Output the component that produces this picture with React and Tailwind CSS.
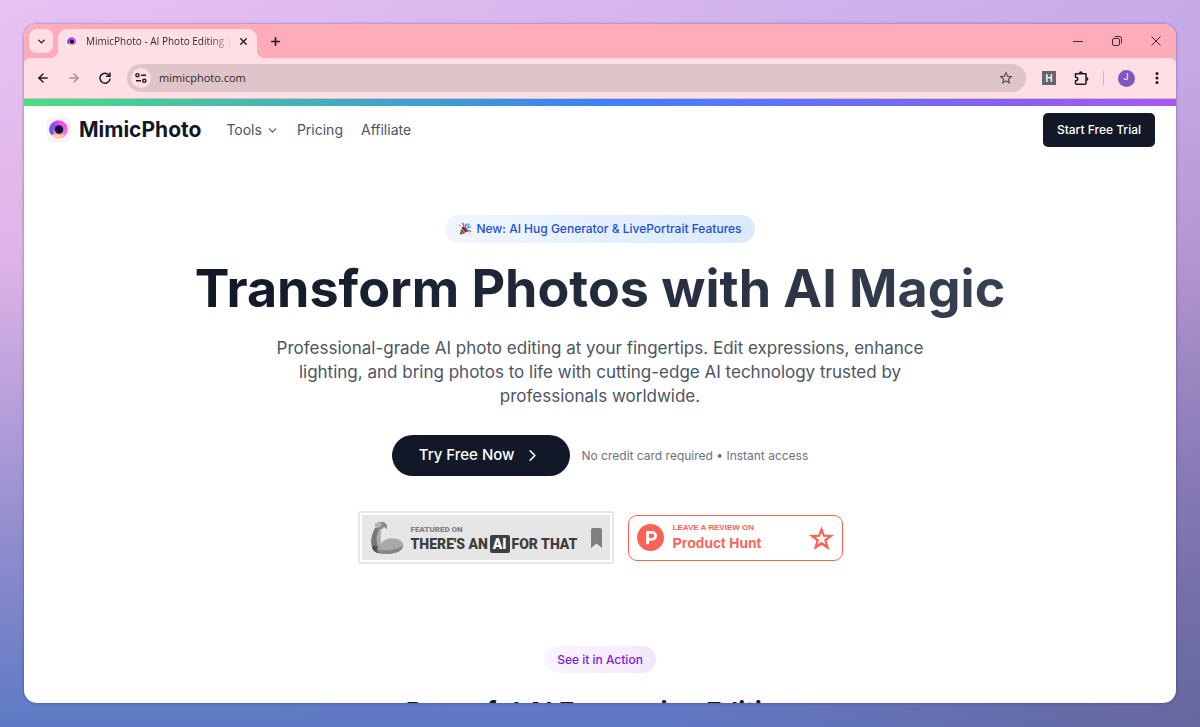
import { useId } from "react";
import { ArrowLeft, ArrowRight, ChevronDown, ChevronRight, Plus, X } from "lucide-react";

function LogoMark({ className }) {
  const id = useId();

  return (
    <svg viewBox="0 0 24 24" className={className} aria-hidden="true">
      <defs>
        <linearGradient id={`${id}-ring`} x1="0.8" y1="0" x2="0.4" y2="1">
          <stop offset="0" stopColor="#f03ff0" />
          <stop offset="0.6" stopColor="#f774dc" />
          <stop offset="1" stopColor="#ffc39a" />
        </linearGradient>
        <linearGradient id={`${id}-side`} x1="0" y1="0.7" x2="1" y2="0">
          <stop offset="0" stopColor="#5a62f5" />
          <stop offset="0.4" stopColor="#8a50f0" />
          <stop offset="0.9" stopColor="#f044f0" />
        </linearGradient>
      </defs>
      <rect x="0.5" y="0.5" width="23" height="23" rx="5" fill="#f8f5fd" stroke="#f0edf8" />
      <circle cx="11.500" cy="11.500" r="9.300" fill={`url(#${id}-ring)`} />
      <path d="M10 2.500C4.500 4 1.500 8.500 2.400 13.500 3.500 16.500 5 17.500 7 16.500 5.500 13 7.500 8.500 13 7.500Z" fill={`url(#${id}-side)`} />
      <path d="M4.500 17C8 15.500 12 18 17.500 16 15 21.500 8 22.500 4.500 17Z" fill="#ffcfa8" />
      <circle cx="12" cy="11.500" r="4.300" fill="#160f33" />
    </svg>
  );
}

function PartyIcon() {
  return (
    <svg viewBox="0 0 24 24" className="size-3.5" aria-hidden="true">
      <path d="M2 22 7 8l9 9Z" fill="#e0a03c" />
      <path d="M5 14l6 6M4 18l3 3M7 9l8 8" stroke="#4b3b63" strokeWidth="2.200" />
      <ellipse cx="12" cy="12.500" rx="3" ry="6" transform="rotate(-45 12 12.500)" fill="#5a3a56" />
      <path d="M9 7c1-2 0-4-2-5M12 10c0-4 1-6 4-7" fill="none" stroke="#ef3f7a" strokeWidth="2.400" />
      <path d="M14 12c2-3 4-4 8-3M16 8l4-5" fill="none" stroke="#33b5ee" strokeWidth="2.400" />
      <path d="M16 15c2-1 4 0 6 2" fill="none" stroke="#ef3f7a" strokeWidth="2.400" />
      <circle cx="3" cy="6" r="1.400" fill="#33b5ee" />
      <circle cx="20" cy="21" r="1.400" fill="#f2b632" />
    </svg>
  );
}

function ArmIcon() {
  return (
    <svg viewBox="0 0 34 34" className="h-[34px] w-[34px] shrink-0" aria-hidden="true">
      <path d="M5 3 9 1l5 0 3 3 0 4-3-2-2 2-2 1-4-1Z" fill="#8a8a8a" />
      <path d="M5 3 9 1l3 2-2 3-4 1Z" fill="#b5b5b5" />
      <path d="M5 7C2 13 0 20 2 26c1 4 4 6 9 7l-1-8C8 20 9 12 10 8Z" fill="#777" />
      <path d="M9 8c-3 6-3 12-1 18l3-5c-1-5 0-9 0-13Z" fill="#ababab" />
      <path d="M2 26c2-2 4-2 5 0l3 6c-4 0-7-2-8-6Z" fill="#4f4f4f" />
      <path d="M9 25c4-7 12-9 18-7 5 1 7 5 6 8-2 5-9 7-17 7-5 0-8-1-9-4Z" fill="#a9a9a9" />
      <path d="M7 28c7 2 16 2 26-3-1 6-9 8-17 8-5 0-8-1-9-5Z" fill="#858585" />
    </svg>
  );
}

const iconButton = "flex h-7 items-center justify-center text-[#1f1a1c]";

function TabStrip() {
  return (
    <div className="flex h-[34px] shrink-0 items-end bg-[#ffacba] pr-px pl-[5px]">
      <button aria-label="Search tabs" className="mb-[5px] flex size-6 items-center justify-center rounded-[8px] bg-[#ffdfe5] text-[#1f1a1c]">
        <ChevronDown size={11} strokeWidth={3} />
      </button>

      {/* Active tab */}
      <div className="relative ml-[5px] flex h-[29px] w-[199px] items-center rounded-t-[9px] bg-[#ffdfe5] pr-1.5 pb-1 pl-2">
        <span className="absolute bottom-0 -left-2 size-2 bg-[radial-gradient(circle_at_0_0,transparent_8px,#ffdfe5_8px)]" />
        <span className="absolute -right-2 bottom-0 size-2 bg-[radial-gradient(circle_at_100%_0,transparent_8px,#ffdfe5_8px)]" />
        <LogoMark className="size-3 shrink-0" />
        <span className="ml-2 mask-r-from-85% font-['Open_Sans','Noto_Sans',sans-serif] text-[10px] whitespace-nowrap text-[#332c2e]">
          MimicPhoto - AI Photo Editing |
        </span>
        <button aria-label="Close tab" className="ml-auto flex size-4 items-center justify-center text-[#1f1a1c]">
          <X size={11} strokeWidth={3} />
        </button>
      </div>

      <button aria-label="New tab" className="mb-[5px] ml-1.5 flex size-6 items-center justify-center text-[#1f1a1c]">
        <Plus size={13} strokeWidth={3} />
      </button>

      {/* Window controls */}
      <div className="ml-auto flex h-full items-center text-[#3d2b30]">
        <button aria-label="Minimize" className="flex w-[39px] justify-center">
          <svg viewBox="0 0 10 10" className="size-2.5"><path d="M0 5.500H10" stroke="currentColor" /></svg>
        </button>
        <button aria-label="Restore" className="flex w-[39px] justify-center">
          <svg viewBox="0 0 10 10" className="size-2.5" fill="none" stroke="currentColor">
            <rect x="0.500" y="2.500" width="7" height="7" rx="1.500" />
            <path d="M2.500 1C3 .5 3.500.5 4 .5h3.500a2 2 0 0 1 2 2V6c0 .5 0 1-.5 1.500" />
          </svg>
        </button>
        <button aria-label="Close" className="flex w-[39px] justify-center">
          <svg viewBox="0 0 10 10" className="size-2.5"><path d="M.5.5l9 9m0-9l-9 9" stroke="currentColor" /></svg>
        </button>
      </div>
    </div>
  );
}

function Toolbar() {
  return (
    <div className="shrink-0 bg-[#ffacba]">
      <div className="flex h-[41px] items-center rounded-t-[6px] border-b border-[#d9bcc4] bg-[#ffdfe5] pr-[5px] pl-[3px]">
        <button aria-label="Back" className={`${iconButton} w-[31px]`}>
          <ArrowLeft size={14} strokeWidth={2.5} />
        </button>
        <button aria-label="Forward" className="flex h-7 w-[31px] items-center justify-center text-[#a58f94]">
          <ArrowRight size={14} strokeWidth={2.5} />
        </button>
        <button aria-label="Reload" className={`${iconButton} w-[31px]`}>
          <svg viewBox="0 0 12 12" className="size-3" fill="none" stroke="currentColor" strokeWidth="1.500">
            <path d="M10.200 3.500A5 5 0 1 0 11 6.500" />
            <path d="M11 .5V4.300H7" />
          </svg>
        </button>

        <div className="mx-[7px] flex h-7 flex-1 items-center rounded-full bg-[#dfc4c9] px-1">
          <button aria-label="View site information" className="flex size-5 shrink-0 items-center justify-center rounded-full bg-[#ffdfe5] text-[#1f1a1c]">
            <svg viewBox="0 0 12 12" className="size-3" fill="none" stroke="currentColor" strokeWidth="1.400">
              <circle cx="2.500" cy="3.200" r="1.600" />
              <path d="M6 3.200h5M1 8.800h5" />
              <circle cx="9.300" cy="8.800" r="1.600" />
            </svg>
          </button>
          <input
            aria-label="Address"
            defaultValue="mimicphoto.com"
            className="ml-2 min-w-0 flex-1 bg-transparent font-['Open_Sans','Noto_Sans',sans-serif] text-[11px] text-[#33292c] outline-none"
          />
          <button aria-label="Bookmark this tab" className="mr-1.5 flex size-5 items-center justify-center text-[#4b4346]">
            <svg viewBox="0 0 24 24" className="size-4" fill="currentColor">
              <path d="M22 9.240l-7.190-.62L12 2 9.190 8.630 2 9.240l5.460 4.730L5.820 21 12 17.270 18.180 21l-1.630-7.030L22 9.240zM12 15.400l-3.760 2.270 1-4.280-3.320-2.880 4.380-.38L12 6.100l1.710 4.040 4.380.38-3.320 2.880 1 4.280L12 15.400z" />
            </svg>
          </button>
        </div>

        <button aria-label="Extension" className={`${iconButton} w-8`}>
          <span className="flex size-3.5 items-center justify-center bg-[#666] font-['Roboto',sans-serif] text-[10px] font-medium text-white">
            H
          </span>
        </button>
        <button aria-label="Extensions" className={`${iconButton} w-8`}>
          <svg viewBox="0 0 15 15" className="size-[15px]">
            <path d="M1.500 2.700H12v9.600q0 1-1 1H2.500q-1 0-1-1V9.800c3-.3 3-3.300 0-3.600Z" fill="none" stroke="currentColor" strokeWidth="1.500" strokeLinejoin="round" />
            <path d="M5 2.200a1.900 1.900 0 0 1 3.800 0ZM12.500 6a1.900 1.900 0 0 1 0 3.800Z" fill="currentColor" />
          </svg>
        </button>
        <span className="flex w-3 justify-center">
          <span className="h-3.5 w-px bg-[#ff9fb1]" />
        </span>
        <button aria-label="Profile" className="flex w-[34px] justify-center">
          <span className="flex size-[17px] items-center justify-center rounded-full bg-[#7e57c2] font-['Roboto',sans-serif] text-[9px] text-white">
            J
          </span>
        </button>
        <button aria-label="Menu" className={`${iconButton} w-7`}>
          <svg viewBox="0 0 4 14" className="h-3.5 w-1" fill="currentColor">
            <circle cx="2" cy="2.500" r="1.500" />
            <circle cx="2" cy="7" r="1.500" />
            <circle cx="2" cy="11.500" r="1.500" />
          </svg>
        </button>
      </div>
    </div>
  );
}

function SiteHeader() {
  return (
    <header className="flex items-center py-[7px] pr-[21px] pl-[23px]">
      <a href="#home" className="flex items-center gap-2">
        <LogoMark className="size-6" />
        <span className="text-[21px] leading-6 font-bold text-[#111827]">MimicPhoto</span>
      </a>
      <nav className="ml-[25px] flex items-center gap-[18px] text-[14px] leading-5 text-[#4b5563]">
        <button className="flex items-center gap-1">
          Tools
          <ChevronDown size={13} />
        </button>
        <a href="#pricing">Pricing</a>
        <a href="#affiliate">Affiliate</a>
      </nav>
      <a href="#trial" className="ml-auto flex h-[34px] items-center rounded-[5px] bg-[#111827] px-3.5 text-[12px] font-medium text-white">
        Start Free Trial
      </a>
    </header>
  );
}

function Badges() {
  return (
    <div className="mt-[35px] flex items-center gap-3.5 text-left">
      <a href="#featured" className="flex h-[53px] w-64 rounded-[3px] border-2 border-[#e6e6e6] bg-white p-0.5">
        <span className="flex flex-1 items-center bg-[#e6e6e6] px-2">
          <ArmIcon />
          <span className="ml-[7px] flex flex-col pt-0.5 font-['Roboto',sans-serif] font-black whitespace-nowrap">
            <span className="text-[8px] leading-[10px] text-[#808080]">FEATURED ON</span>
            <span className="flex items-center text-[14px] leading-[18px] text-[#3f3f3f]">
              THERE&apos;S AN
              <span className="mx-0.5 rounded-[2px] bg-[#3f3f3f] px-[3px] text-white">AI</span>
              FOR THAT
            </span>
          </span>
          <svg viewBox="0 0 11 20" className="ml-auto h-5 w-[11px]" aria-hidden="true">
            <path d="M0 2Q0 0 2 0H9q2 0 2 2V20L5.500 15.500 0 20Z" fill="#808080" />
          </svg>
        </span>
      </a>

      <a href="#review" className="flex h-[46px] w-[215px] items-center rounded-[9px] border border-[#ff6154] bg-white px-2 font-['Liberation_Sans',sans-serif] font-bold text-[#ff6154]">
        <svg viewBox="0 0 27 27" className="size-[27px]" aria-hidden="true">
          <circle cx="13.500" cy="13.500" r="13.500" fill="#ff6154" />
          <path d="M10.500 20.300V8.300h4.600a3.500 3.500 0 0 1 0 7h-4.600" fill="none" stroke="#fff" strokeWidth="2.800" />
        </svg>
        <span className="ml-[9px] flex flex-col">
          <span className="text-[8px] leading-[10px]">LEAVE A REVIEW ON</span>
          <span className="text-[14px] leading-5">Product Hunt</span>
        </span>
        <svg viewBox="2 2 20 19" className="ml-auto h-6 w-[25px]" fill="currentColor" aria-hidden="true">
          <path fillRule="evenodd" d="M12 2l2.500 6.800 7.500.3-5.900 4.500 2.200 7.400L12 17l-6.300 4 2.200-7.400L2 9.100l7.500-.3ZM12 7l-1.300 3.500-3.700.1 3 2.300-1.200 3.700L12 14.500l3.200 2.100-1.200-3.700 3-2.300-3.700-.1Z" />
        </svg>
      </a>
    </div>
  );
}

function Hero() {
  return (
    <main className="flex flex-col items-center pt-[61px] text-center">
      <p className="flex h-7 items-center gap-1 rounded-full bg-linear-to-r from-blue-50 to-blue-100 px-[13px] text-[12px] font-medium text-[#1d4ed8]">
        <PartyIcon />
        New: AI Hug Generator &amp; LivePortrait Features
      </p>

      <h1 className="mt-4 bg-linear-to-r from-gray-900 to-gray-700 bg-clip-text text-[52px] leading-[60px] font-bold whitespace-nowrap text-transparent">
        Transform Photos with AI Magic
      </h1>

      <p className="mt-[17px] text-[17px] leading-6 text-[#4b5563]">
        Professional-grade AI photo editing at your fingertips. Edit expressions, enhance
        <br />
        lighting, and bring photos to life with cutting-edge AI technology trusted by
        <br />
        professionals worldwide.
      </p>

      <div className="mt-[27px] flex items-center gap-3">
        <button className="flex h-[41px] items-center gap-2 rounded-full bg-[#111827] pr-7 pl-[27px] text-[15px] font-medium text-white">
          Try Free Now
          <ChevronRight size={19} />
        </button>
        <span className="text-[12px] text-[#6b7280]">No credit card required • Instant access</span>
      </div>

      <Badges />

      <p className="mt-[82px] flex h-[27px] items-center rounded-full bg-linear-to-r from-purple-50 to-purple-100 px-[13px] text-[12px] font-medium text-[#7e22ce]">
        See it in Action
      </p>
      <h2 className="mt-[23px] text-[26px] leading-8 font-bold whitespace-nowrap text-[#111827]">
        Powerful AI Expression Editing
      </h2>
    </main>
  );
}

export default function App() {
  return (
    <div className="h-screen bg-[radial-gradient(ellipse_45%_90%_at_100%_100%,rgb(110_90_120/0.5),transparent),linear-gradient(to_right,transparent,rgb(100_100_200/0.25)),linear-gradient(to_bottom,#e8c2f3,#e0b4e8_35%,#8b8acc_77%,#5c7ac4)] p-6 font-['Inter',sans-serif]">
      <div className="flex h-full flex-col overflow-hidden rounded-[13px] bg-white shadow-[0_0_3px_rgb(40_30_80/0.5)]">
        <TabStrip />
        <Toolbar />
        <div className="min-h-0 flex-1 overflow-hidden">
          <div className="h-[7px] bg-linear-to-r/srgb from-[#4ade80] via-[#3b82f6] to-[#a855f7]" />
          <SiteHeader />
          <Hero />
        </div>
      </div>
    </div>
  );
}
